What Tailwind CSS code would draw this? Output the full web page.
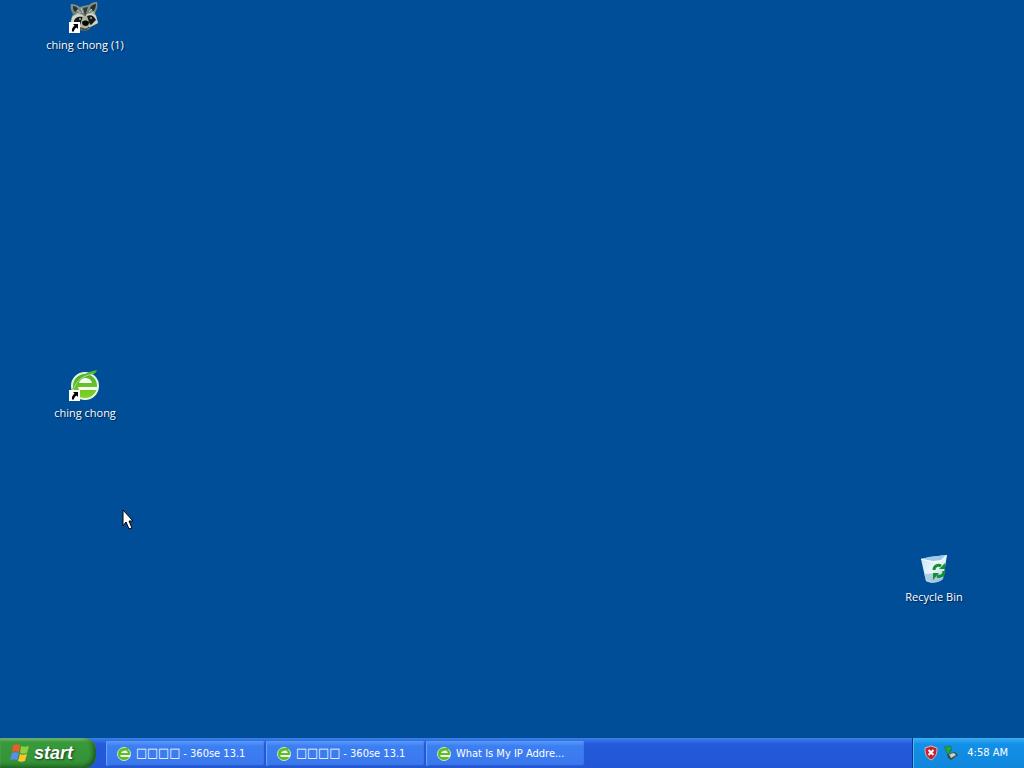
<!DOCTYPE html>
<html lang="en">
<head>
<meta charset="utf-8">
<meta name="viewport" content="width=device-width, initial-scale=1">
<title>Desktop</title>
<script src="https://cdn.jsdelivr.net/npm/@tailwindcss/browser@4"></script>
</head>
<body class="flex h-screen flex-col overflow-hidden bg-[#004e98] font-['DejaVu_Sans_Condensed','Noto_Sans',sans-serif] text-[11px] leading-4 text-white">

<svg class="absolute size-0" aria-hidden="true">
  <defs>
    <linearGradient id="leaf" x1="0" y1="0" x2="0" y2="1">
      <stop offset="0" stop-color="#4fae30"/><stop offset="1" stop-color="#86d426"/>
    </linearGradient>
    <linearGradient id="binSide" x1="0" y1="0" x2="1" y2="1">
      <stop offset="0" stop-color="#c4e4f4"/><stop offset=".5" stop-color="#eaf7fc"/><stop offset="1" stop-color="#9cc9e4"/>
    </linearGradient>
    <linearGradient id="fur" x1="0" y1="0" x2="0" y2="1">
      <stop offset="0" stop-color="#8a958c"/><stop offset="1" stop-color="#56635d"/>
    </linearGradient>
    <symbol id="browser" viewBox="0 0 32 32">
      <circle cx="16" cy="17" r="13" fill="url(#leaf)" stroke="#e4f8dc" stroke-width="2"/>
      <path d="M10 14c1-4 3-5 6-5s6 1 7 5z" fill="#f2fdef"/>
      <path d="M9 18h19v3H10z" fill="#f2fdef"/>
      <path d="M3 22C5 11 13 4 28 1c-1 3-3 4-6 5C12 9 7 14 3 22z" fill="#55b535"/>
      <path d="M5 19C8 11 14 7 24 5" fill="none" stroke="#b5e49b"/>
    </symbol>
    <symbol id="browserSmall" viewBox="0 0 16 16">
      <circle cx="8" cy="8" r="6.500" fill="#5fbb2b" stroke="#c6efb8"/>
      <path d="M5 7c0-2 1-3 3-3s3 1 4 3z" fill="#f2fdef"/>
      <path d="M4 9h10v2H5z" fill="#effbe9"/>
      <path d="M2 11C3 6 7 3 14 1c-1 1-2 2-4 3-4 1-6 3-8 7z" fill="#58b32f"/>
    </symbol>
    <symbol id="shortcut" viewBox="0 0 11 11">
      <path d="M0 0h11v11H0z" fill="#fff"/>
      <path d="M4 2h5v5L7.500 5.500C6 6.500 5 7.500 5 9.500H3C2.500 7 3.500 5.500 5.500 3.500z" fill="#000"/>
    </symbol>
  </defs>
</svg>

<main class="relative min-h-0 flex-1 font-['Open_Sans','Noto_Sans',sans-serif]">
  <a href="#" class="absolute left-[45px] top-px flex w-20 flex-col items-center gap-1">
    <span class="relative block size-8">
      <svg class="size-8" viewBox="0 0 32 32" aria-hidden="true">
        <path d="M2 3c3 0 6 1 9 3 3-1 6-2 9-2 2-2 5-3 8-3 1 4 0 8-2 11 2 4 2 7 3 10-3 2-5 3-7 4-2 3-4 4-7 4-4 0-6-2-8-4-3 0-4-2-6-4 1-4 2-7 3-9-2-3-3-6-2-10z" fill="url(#fur)"/>
        <path d="M4 5c2 0 4 1 5 3l-3 3C4 9 4 7 4 5zM27 3c0 3-1 6-3 7l-3-3c1-2 3-4 6-4z" fill="#26302e"/>
        <path d="M3 16c3-3 7-4 11-2l2 3 2-4c4-2 7-1 9 2l2 7-8 4H9c-3-1-5-3-7-5z" fill="#d3d6c6"/>
        <path d="M5 21c0-4 4-6 9-5l1 4-5 5zM18 15c4-2 7 0 9 4l-5 5-5-4z" fill="#151b1c"/>
        <path d="M14 7l2 8 3-9" fill="#313d3a"/>
        <path d="M8 9l4 3M23 8l-3 3M7 13l4-1M26 12l-4-1M12 7l2 5" stroke="#b9c1b2"/>
        <path d="M14 15h4l3 9-2 4h-5l-3-4z" fill="#b3b39c"/>
        <path d="M13 21c2-2 5-2 7 0 0 3-2 4-3 4-2 0-4-1-4-4z" fill="#050909"/>
        <path d="M13 27c3 2 5 1 7-1" fill="none" stroke="#252e2b"/>
        <circle cx="11" cy="18" r="1" fill="#a6aa9b"/><circle cx="22" cy="17" r="1" fill="#a6aa9b"/>
      </svg>
      <svg class="absolute bottom-0 left-0 size-[11px]" aria-hidden="true"><use href="#shortcut"/></svg>
    </span>
    <span class="whitespace-nowrap [text-shadow:1px_1px_1px_#00214a]">ching chong (1)</span>
  </a>

  <a href="#" class="absolute left-[45px] top-[369px] flex w-20 flex-col items-center gap-1">
    <span class="relative block size-8">
      <svg class="size-8" aria-hidden="true"><use href="#browser"/></svg>
      <svg class="absolute bottom-0 left-0 size-[11px]" aria-hidden="true"><use href="#shortcut"/></svg>
    </span>
    <span class="whitespace-nowrap [text-shadow:1px_1px_1px_#00214a]">ching chong</span>
  </a>

  <a href="#" class="absolute left-[894px] top-[553px] flex w-20 flex-col items-center gap-1">
    <svg class="size-8" viewBox="0 0 32 32" aria-hidden="true">
      <path d="M3 6l8-2 18-2-4 24c-4 4-12 5-17 2z" fill="url(#binSide)"/>
      <path d="M4 6l8-2 16-2-5 5-8 1z" fill="#9acae6"/>
      <path d="M3 6l12 3 8-1 6-6" fill="none" stroke="#f6fdff"/>
      <path d="M6 21l2 6c4 3 11 3 16 0l1-4c-5-3-13-3-19-2z" fill="#93bfd9" opacity=".7"/>
      <path d="M16 17c0-4 4-6 7-4M26 18c0 5-4 6-7 5" fill="none" stroke="#16902f" stroke-width="3"/>
      <path d="M21 16l6 0 0-6zM21 20l-6 0 0 7z" fill="#16902f"/>
    </svg>
    <span class="whitespace-nowrap [text-shadow:1px_1px_1px_#00214a]">Recycle Bin</span>
  </a>

  <svg class="absolute left-[122px] top-[509px] h-[22px] w-[14px]" viewBox="0 0 14 22" aria-hidden="true">
    <path d="M1 1v16l3-4 3 7 3-1-3-7h4z" fill="#fff" stroke="#000"/>
  </svg>
</main>

<footer class="flex h-[30px] shrink-0 bg-linear-to-b from-[#3a80ea] from-0% via-[#245bdb] via-20% to-[#2256d6]">
  <button type="button" class="flex w-24 shrink-0 items-center gap-1 rounded-r-xl bg-linear-to-b from-[#5aa55a] from-0% via-[#389a3b] via-15% to-[#348f37] pl-[10px] shadow-[inset_-3px_-2px_4px_#1c5c20,inset_0_2px_2px_#73b873]">
    <svg class="size-5" viewBox="0 0 20 20" aria-hidden="true">
      <path d="M3 2c2-1 5-1 7 0L9 9C6 8 4 8 2 9z" fill="#ee5a2b"/>
      <path d="M11 3c2 1 5 1 8 0l-2 7c-2 1-5 1-7 0z" fill="#8fce3f"/>
      <path d="M2 10c2-1 4-1 7 0l-2 7c-2-1-5-1-7 0z" fill="#5b8df0"/>
      <path d="M10 11c2 1 4 1 7 0l-2 7c-2 1-5 1-7 0z" fill="#fbc530"/>
    </svg>
    <span class="font-['Liberation_Sans',sans-serif] text-lg font-bold italic leading-5 [text-shadow:1px_1px_2px_#173f19]">start</span>
  </button>

  <nav class="flex min-w-0 flex-1 gap-px pb-0.5 pl-[10px] pt-[3px]" aria-label="Open windows">
    <button type="button" class="flex w-[159px] items-center gap-1 rounded-xs bg-linear-to-b from-[#5a9bfa] from-0% via-[#3c7ff3] via-20% to-[#3a78ec] pl-[10px] shadow-[inset_1px_0_1px_#6ca5f8,inset_-1px_-1px_1px_#2456c5]">
      <svg class="size-4 shrink-0" aria-hidden="true"><use href="#browserSmall"/></svg>
      <span class="truncate"><span class="text-[13px]">□□□□</span> - 360se 13.1</span>
    </button>
    <button type="button" class="flex w-[159px] items-center gap-1 rounded-xs bg-linear-to-b from-[#5a9bfa] from-0% via-[#3c7ff3] via-20% to-[#3a78ec] pl-[10px] shadow-[inset_1px_0_1px_#6ca5f8,inset_-1px_-1px_1px_#2456c5]">
      <svg class="size-4 shrink-0" aria-hidden="true"><use href="#browserSmall"/></svg>
      <span class="truncate"><span class="text-[13px]">□□□□</span> - 360se 13.1</span>
    </button>
    <button type="button" class="flex w-[159px] items-center gap-1 rounded-xs bg-linear-to-b from-[#5a9bfa] from-0% via-[#3c7ff3] via-20% to-[#3a78ec] pl-[10px] shadow-[inset_1px_0_1px_#6ca5f8,inset_-1px_-1px_1px_#2456c5]">
      <svg class="size-4 shrink-0" aria-hidden="true"><use href="#browserSmall"/></svg>
      <span class="truncate">What Is My IP Addre...</span>
    </button>
  </nav>

  <div class="flex shrink-0 items-center gap-1 border-l border-[#0d2f8c] bg-linear-to-b from-[#37b0f4] from-0% via-[#1290e8] via-20% to-[#1187dc] pl-[10px] pr-4 shadow-[inset_1px_0_0_#3fc0f8]">
    <svg class="size-4" viewBox="0 0 16 16" aria-hidden="true">
      <path d="M8 1l6 2c0 6-1 9-6 12C3 12 2 9 2 3z" fill="#c91f2c" stroke="#d9b6c4"/>
      <path d="M5.500 5l5 5m0-5l-5 5" stroke="#fff" stroke-width="2"/>
    </svg>
    <svg class="size-4" viewBox="0 0 16 16" aria-hidden="true">
      <path d="M4 9l8-2 3 3-7 5-3-2z" fill="#3c4a4c"/>
      <path d="M6 9l5-1 2 2-5 3z" fill="#c6d2cc"/>
      <path d="M1 2l7-1 1 5-2-1c-1 2 0 3 1 4-4 0-6-2-5-5z" fill="#27a53c" stroke="#0d6f2a" stroke-width=".5"/>
    </svg>
    <time class="ml-1 whitespace-nowrap" datetime="04:58">4:58 AM</time>
  </div>
</footer>
</body>
</html>
